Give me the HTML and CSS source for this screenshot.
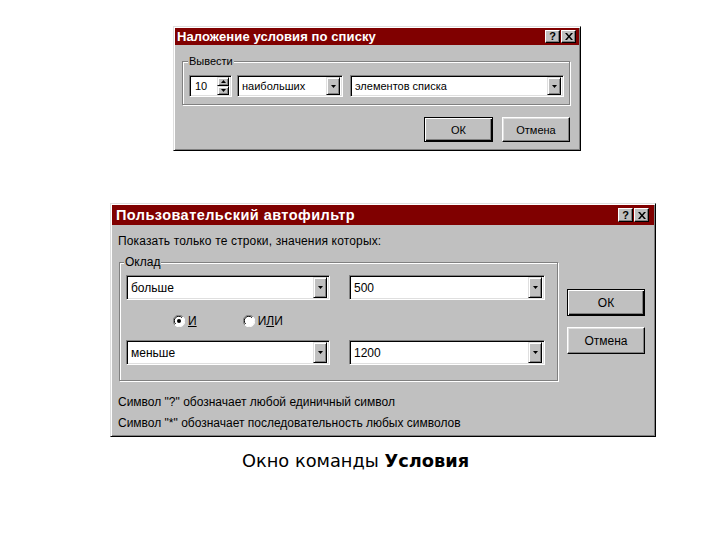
FILE: index.html
```html
<!DOCTYPE html>
<html lang="ru">
<head>
<meta charset="utf-8">
<title>Окно команды Условия</title>
<link rel="stylesheet" href="styles.css">
</head>
<body>
<div class="page">

  <div class="dlg dlg-top">
    <div class="titlebar tb-top">
      <span class="title">Наложение условия по списку</span>
      <span class="tbtns">
        <span class="tbtn">?</span>
        <span class="tbtn"><svg viewBox="0 0 8 7" width="8" height="7"><path d="M0 0h2l2 2.5L6 0h2L5 3.5 8 7H6L4 4.5 2 7H0l3-3.5z" fill="#000"/></svg></span>
      </span>
    </div>
    <div class="content-top">
      <div class="group g-top">
        <span class="glabel">Вывести</span>
        <div class="grow-top">
          <div class="field spin">
            <span class="val">10</span>
            <span class="spinbtns">
              <span class="sb"><svg viewBox="0 0 5 3" width="5" height="3"><path d="M2.5 0L5 3H0z" fill="#000"/></svg></span>
              <span class="sb"><svg viewBox="0 0 5 3" width="5" height="3"><path d="M0 0h5L2.5 3z" fill="#000"/></svg></span>
            </span>
          </div>
          <div class="field combo c-nb">
            <span class="val">наибольших</span>
            <span class="dd"><svg viewBox="0 0 5 3" width="5" height="3"><path d="M0 0h5L2.5 3z" fill="#000"/></svg></span>
          </div>
          <div class="field combo c-el">
            <span class="val">элементов списка</span>
            <span class="dd"><svg viewBox="0 0 5 3" width="5" height="3"><path d="M0 0h5L2.5 3z" fill="#000"/></svg></span>
          </div>
        </div>
      </div>
      <div class="btnrow-top">
        <span class="btn def b-ok-top">ОК</span>
        <span class="btn b-cancel-top">Отмена</span>
      </div>
    </div>
  </div>

  <div class="dlg dlg-bot">
    <div class="titlebar tb-bot">
      <span class="title">Пользовательский автофильтр</span>
      <span class="tbtns">
        <span class="tbtn">?</span>
        <span class="tbtn"><svg viewBox="0 0 8 7" width="8" height="7"><path d="M0 0h2l2 2.5L6 0h2L5 3.5 8 7H6L4 4.5 2 7H0l3-3.5z" fill="#000"/></svg></span>
      </span>
    </div>
    <div class="content-bot">
      <div class="mainrow">
        <div class="leftcol">
          <div class="prompt">Показать только те строки, значения которых:</div>
          <div class="group g-bot">
            <span class="glabel gl-bot">Оклад</span>
            <div class="crow crow1">
              <div class="field combo c-op"><span class="val">больше</span><span class="dd dd-b"><svg viewBox="0 0 5 3" width="5" height="3"><path d="M0 0h5L2.5 3z" fill="#000"/></svg></span></div>
              <div class="field combo c-v"><span class="val">500</span><span class="dd dd-b"><svg viewBox="0 0 5 3" width="5" height="3"><path d="M0 0h5L2.5 3z" fill="#000"/></svg></span></div>
            </div>
            <div class="radiorow">
              <span class="radio r-and">
                <svg viewBox="0 0 12 12" width="12" height="12"><circle cx="6" cy="6" r="5.5" fill="#fff"/><path d="M1.8 9.9A5.5 5.5 0 0 1 9.9 1.8" fill="none" stroke="#808080"/><path d="M2.6 9A4.3 4.3 0 0 1 9 2.6" fill="none" stroke="#000"/><path d="M10.2 2.1A5.5 5.5 0 0 1 2.1 10.2" fill="none" stroke="#fff"/><circle cx="6" cy="6" r="2" fill="#000"/></svg>
                <span class="rl"><u>И</u></span>
              </span>
              <span class="radio r-or">
                <svg viewBox="0 0 12 12" width="12" height="12"><circle cx="6" cy="6" r="5.5" fill="#fff"/><path d="M1.8 9.9A5.5 5.5 0 0 1 9.9 1.8" fill="none" stroke="#808080"/><path d="M2.6 9A4.3 4.3 0 0 1 9 2.6" fill="none" stroke="#000"/><path d="M10.2 2.1A5.5 5.5 0 0 1 2.1 10.2" fill="none" stroke="#fff"/></svg>
                <span class="rl">И<u>Л</u>И</span>
              </span>
            </div>
            <div class="crow crow3">
              <div class="field combo c-op"><span class="val">меньше</span><span class="dd dd-b"><svg viewBox="0 0 5 3" width="5" height="3"><path d="M0 0h5L2.5 3z" fill="#000"/></svg></span></div>
              <div class="field combo c-v"><span class="val">1200</span><span class="dd dd-b"><svg viewBox="0 0 5 3" width="5" height="3"><path d="M0 0h5L2.5 3z" fill="#000"/></svg></span></div>
            </div>
          </div>
        </div>
        <div class="rightcol">
          <span class="btn def b-bot">ОК</span>
          <span class="btn b-bot">Отмена</span>
        </div>
      </div>
      <div class="note">Символ "?" обозначает любой единичный символ</div>
      <div class="note">Символ "*" обозначает последовательность любых символов</div>
    </div>
  </div>

  <div class="caption">Окно команды <b>Условия</b></div>
</div>
</body>
</html>
```

FILE: styles.css
```css
* { box-sizing: border-box; }

html, body {
  margin: 0;
  padding: 0;
  background: #fff;
}

body {
  width: 720px;
  height: 540px;
  overflow: hidden;
  font-family: "Liberation Sans", Arial, sans-serif;
  color: #000;
}

.page {
  display: flex;
  flex-direction: column;
  align-items: flex-start;
  padding-top: 26px;
}

/* ---------- dialog frame ---------- */
.dlg {
  background: #c0c0c0;
  border: 1px solid;
  border-color: #dfdfdf #000 #000 #dfdfdf;
  box-shadow: inset 1px 1px 0 #fff, inset -1px -1px 0 #808080;
  padding: 1px;
  display: flex;
  flex-direction: column;
}

.dlg-top {
  margin-left: 173px;
  width: 408px;
  height: 125px;
}

.dlg-bot {
  margin-top: 52px;
  margin-left: 110px;
  width: 546px;
  height: 234px;
}

.titlebar {
  background: #800000;
  color: #fff;
  display: flex;
  align-items: center;
  justify-content: space-between;
  flex: none;
}

.title {
  font-weight: bold;
  white-space: nowrap;
}

.tb-top {
  height: 17px;
  padding: 0 3px 0 2px;
}
.tb-top .title { font-size: 13px; letter-spacing: 0.1px; }

.tb-bot {
  height: 20px;
  padding: 0 5px 0 4px;
}
.tb-bot .title { font-size: 14.5px; letter-spacing: 0.45px; }

.tbtns {
  display: flex;
  gap: 1px;
}

.tbtn {
  width: 15px;
  height: 13px;
  background: #c0c0c0;
  border: 1px solid;
  border-color: #fff #000 #000 #fff;
  box-shadow: inset -1px -1px 0 #808080;
  color: #000;
  font-size: 11px;
  font-weight: bold;
  line-height: 11px;
  display: flex;
  align-items: center;
  justify-content: center;
}

.tb-bot .tbtn {
  width: 15px;
  height: 14px;
}

/* ---------- group boxes ---------- */
.group {
  border: 1px solid #808080;
  box-shadow: 1px 1px 0 #fff, inset 1px 1px 0 #fff;
  display: flex;
  flex-direction: column;
}

.glabel {
  align-self: flex-start;
  background: #c0c0c0;
  padding: 0 1px;
  font-size: 11px;
  line-height: 13px;
  height: 13px;
  margin-top: -7px;
  margin-left: 5px;
}

/* ---------- fields ---------- */
.field {
  background: #fff;
  border: 1px solid;
  border-color: #808080 #fff #fff #808080;
  box-shadow: inset 1px 1px 0 #000, inset -1px -1px 0 #dfdfdf;
  display: flex;
  align-items: center;
  padding: 2px;
  white-space: nowrap;
}

.val {
  flex: 1;
  padding-left: 2px;
  overflow: hidden;
}

.dd, .sb {
  background: #c0c0c0;
  border: 1px solid;
  border-color: #dfdfdf #000 #000 #dfdfdf;
  box-shadow: inset 1px 1px 0 #fff, inset -1px -1px 0 #808080;
  display: flex;
  align-items: center;
  justify-content: center;
  flex: none;
}

.dd svg, .sb svg { display: block; }

/* ---------- top dialog ---------- */
.content-top {
  display: flex;
  flex-direction: column;
  padding: 16px 9px 0 7px;
}

.g-top {
  height: 44px;
}

.grow-top {
  display: flex;
  gap: 5px;
  margin-top: 7px;
  padding-left: 6px;
  font-size: 11px;
}

.grow-top .field { height: 22px; }

.spin { width: 43px; }
.spin .val { padding-left: 3px; }

.spinbtns {
  display: flex;
  flex-direction: column;
  height: 18px;
}
.sb {
  width: 12px;
  height: 9px;
}

.c-nb { width: 106px; margin-right: 2px; }
.c-el { width: 214px; }

.grow-top .dd {
  width: 14px;
  height: 18px;
}

.btnrow-top {
  display: flex;
  justify-content: flex-end;
  gap: 9px;
  margin-top: 12px;
}

/* ---------- buttons ---------- */
.btn {
  background: #c0c0c0;
  border: 1px solid;
  border-color: #fff #000 #000 #fff;
  box-shadow: inset -1px -1px 0 #808080, inset 1px 1px 0 #dfdfdf;
  display: flex;
  align-items: center;
  justify-content: center;
  font-size: 11px;
}

.btn.def {
  border: 1px solid #000;
  box-shadow: inset 1px 1px 0 #fff, inset -1px -1px 0 #000, inset -2px -2px 0 #808080;
}

.b-ok-top { width: 69px; height: 25px; }
.b-cancel-top { width: 68px; height: 25px; }

/* ---------- bottom dialog ---------- */
.content-bot {
  display: flex;
  flex-direction: column;
  padding: 0 8px 0 6px;
  font-size: 12px;
}

.mainrow {
  display: flex;
  align-items: flex-start;
}

.leftcol {
  display: flex;
  flex-direction: column;
}

.prompt {
  margin-top: 9px;
  line-height: 14px;
  height: 14px;
  white-space: nowrap;
  letter-spacing: 0.15px;
}

.g-bot {
  margin-top: 14px;
  margin-left: 1px;
  width: 439px;
  height: 119px;
}

.gl-bot {
  font-size: 12px;
  line-height: 14px;
  height: 14px;
  margin-top: -8px;
  margin-left: 4px;
}

.crow {
  display: flex;
  gap: 19px;
  padding-left: 6px;
}
.crow1 { margin-top: 6px; }
.crow3 { margin-top: 11px; }

.crow .field { height: 25px; font-size: 12px; }
.c-op { width: 204px; }
.c-v { width: 196px; }

.dd-b {
  width: 14px;
  height: 21px;
}

.radiorow {
  display: flex;
  height: 16px;
  margin-top: 13px;
  padding-left: 53px;
  align-items: center;
}

.radio {
  display: flex;
  align-items: center;
  gap: 3px;
}
.radio svg { display: block; }
.r-or { margin-left: 46px; }
.rl u { text-decoration: underline; }

.rightcol {
  display: flex;
  flex-direction: column;
  gap: 11px;
  margin-left: 9px;
  margin-top: 64px;
}

.b-bot {
  width: 78px;
  height: 27px;
  font-size: 12px;
}

.note {
  line-height: 21px;
  white-space: nowrap;
}
.mainrow + .note { margin-top: 11px; }

/* ---------- caption ---------- */
.caption {
  margin-top: 13px;
  margin-left: 242px;
  font-family: "DejaVu Sans", Verdana, sans-serif;
  font-size: 17.8px;
  line-height: 22px;
  white-space: nowrap;
}
```
